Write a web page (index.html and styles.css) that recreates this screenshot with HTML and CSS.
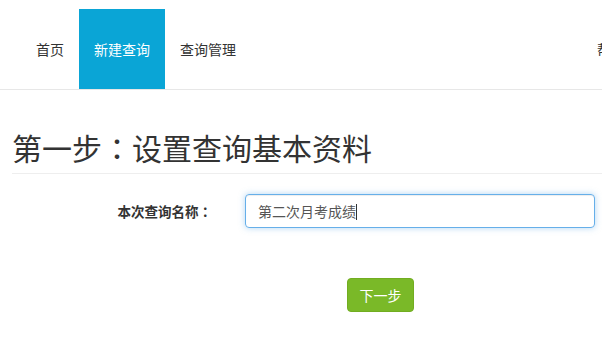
FILE: index.html
```html
<!DOCTYPE html>
<html lang="zh-CN">
<head>
  <meta charset="UTF-8">
  <title>新建查询</title>
  <link rel="stylesheet" href="styles.css">
</head>
<body>
  <nav class="navbar">
    <ul class="nav">
      <li><a href="#">首页</a></li>
      <li class="active"><a href="#">新建查询</a></li>
      <li><a href="#">查询管理</a></li>
      <li class="nav-right"><a href="#">帮助中心</a></li>
    </ul>
  </nav>

  <div class="container">
    <h1 class="page-header">第一步<span class="punct" lang="zh-TW">：</span>设置查询基本资料</h1>

    <form class="form-horizontal">
      <div class="form-row">
        <label class="form-label">本次查询名称<span class="punct" lang="zh-TW">：</span></label>
        <div class="form-control focus">第二次月考成绩<span class="caret"></span></div>
      </div>
      <div class="form-actions">
        <button type="button" class="btn-next">下一步</button>
      </div>
    </form>
  </div>
</body>
</html>
```

FILE: styles.css
```css
/* Reset */
* {
  margin: 0;
  padding: 0;
  box-sizing: border-box;
}

html, body {
  overflow: hidden;
}

body {
  font-family: "Noto Sans CJK SC", "Noto Sans", sans-serif;
  font-size: 14px;
  color: #333;
  background: #fff;
}

/* dois-pontos centrados */
.punct {
  font-family: "Noto Sans CJK TC", sans-serif;
}

/* Barra de navegação */
.navbar {
  height: 90px;
  border-bottom: 1px solid #e7e7e7;
  padding-top: 9px;
}

.nav {
  list-style: none;
  display: flex;
  width: 668px;
  padding-left: 21px;
}

.nav li a {
  display: block;
  height: 80px;
  line-height: 80px;
  padding: 0 15px;
  color: #333;
  text-decoration: none;
}

.nav li.active a {
  background-color: #0aa5d6;
  color: #fff;
}

.nav .nav-right {
  margin-left: auto;
}

/* Conteúdo */
.container {
  padding-left: 12px;
}

.page-header {
  margin-top: 41px;
  padding-bottom: 9px;
  border-bottom: 1px solid #eee;
  font-size: 30px;
  font-weight: normal;
  line-height: 33px;
  color: #333;
}

.form-horizontal {
  margin-top: 20px;
}

.form-row {
  display: flex;
  align-items: center;
  gap: 33px;
}

.form-label {
  width: 200px;
  text-align: right;
  font-size: 13.5px;
  font-weight: bold;
}

.form-control {
  width: 350px;
  height: 34px;
  line-height: 20px;
  padding: 6px 12px;
  border: 1px solid #ccc;
  border-radius: 4px;
  color: #555;
  font-size: 14px;
}

.form-control.focus {
  border-color: #66afe9;
  box-shadow: inset 0 1px 1px rgba(0, 0, 0, 0.075), 0 0 6px rgba(102, 175, 233, 0.5);
}

.caret {
  display: inline-block;
  width: 1px;
  height: 16px;
  background: #333;
  vertical-align: -3px;
}

.form-actions {
  padding-left: 335px;
  margin-top: 50px;
}

.btn-next {
  width: 67px;
  height: 34px;
  border: 1px solid #72ad21;
  border-radius: 4px;
  background-color: #7ab928;
  color: #fff;
  font-family: inherit;
  font-size: 14px;
}
```
